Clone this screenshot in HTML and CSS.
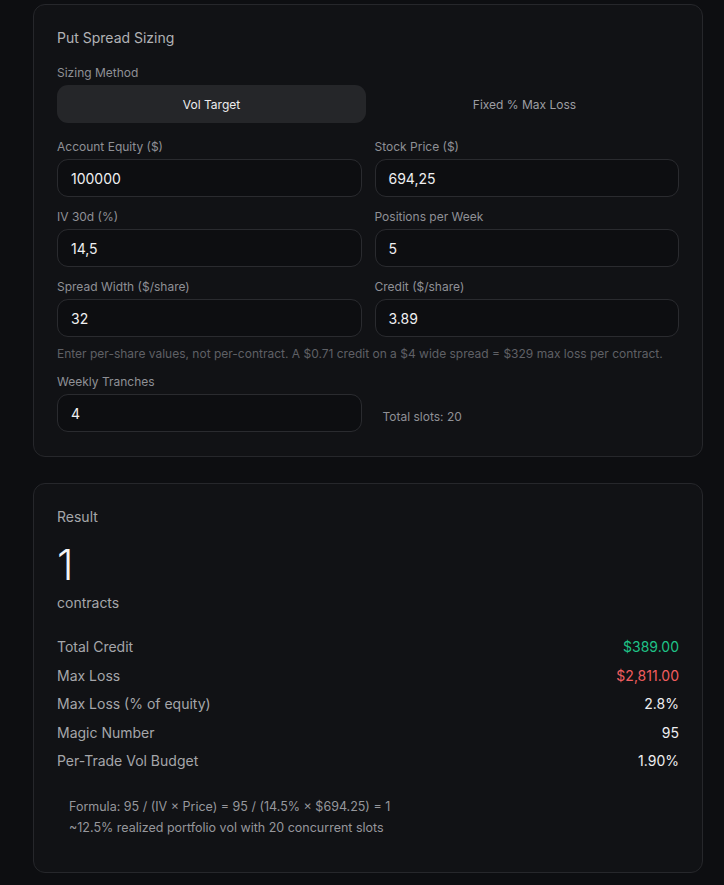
FILE: index.html
```html
<!DOCTYPE html>
<html lang="en">
<head>
<meta charset="utf-8">
<title>Put Spread Sizing</title>
<link rel="stylesheet" href="styles.css">
</head>
<body>
<main class="page">
  <section class="card">
    <h2 class="card-title">Put Spread Sizing</h2>
    <div class="label">Sizing Method</div>
    <div class="toggle">
      <button class="toggle-btn active">Vol Target</button>
      <button class="toggle-btn">Fixed % Max Loss</button>
    </div>
    <div class="grid">
      <div class="field">
        <div class="label">Account Equity ($)</div>
        <div class="input">100000</div>
      </div>
      <div class="field">
        <div class="label">Stock Price ($)</div>
        <div class="input">694,25</div>
      </div>
      <div class="field">
        <div class="label">IV 30d (%)</div>
        <div class="input">14,5</div>
      </div>
      <div class="field">
        <div class="label">Positions per Week</div>
        <div class="input">5</div>
      </div>
      <div class="field">
        <div class="label">Spread Width ($/share)</div>
        <div class="input">32</div>
      </div>
      <div class="field">
        <div class="label">Credit ($/share)</div>
        <div class="input">3.89</div>
      </div>
    </div>
    <p class="hint">Enter per-share values, not per-contract. A $0.71 credit on a $4 wide spread = $329 max loss per contract.</p>
    <div class="grid">
      <div class="field">
        <div class="label">Weekly Tranches</div>
        <div class="input">4</div>
      </div>
      <div class="slots">Total slots: 20</div>
    </div>
  </section>

  <section class="card result">
    <h2 class="result-title">Result</h2>
    <div class="big">1</div>
    <div class="unit">contracts</div>
    <div class="rows">
      <div class="row"><span>Total Credit</span><span class="val green">$389.00</span></div>
      <div class="row"><span>Max Loss</span><span class="val red">$2,811.00</span></div>
      <div class="row"><span>Max Loss (% of equity)</span><span class="val">2.8%</span></div>
      <div class="row"><span>Magic Number</span><span class="val">95</span></div>
      <div class="row"><span>Per-Trade Vol Budget</span><span class="val">1.90%</span></div>
    </div>
    <div class="formula">
      <div>Formula: 95 / (IV × Price) = 95 / (14.5% × $694.25) = 1</div>
      <div>~12.5% realized portfolio vol with 20 concurrent slots</div>
    </div>
  </section>
</main>
</body>
</html>
```
FILE: styles.css
```css
* { box-sizing: border-box; }

html, body {
  margin: 0;
  padding: 0;
  background: #0d0e11;
}

body {
  font-family: Inter, "Noto Sans", "Liberation Sans", sans-serif;
  color: #e9e9eb;
  padding-top: 4px;
}

.page {
  width: 670px;
  margin-left: 33px;
  display: flex;
  flex-direction: column;
  gap: 26px;
}

.card {
  background: #111215;
  border: 1px solid #26272b;
  border-radius: 12px;
  padding: 23px 23px 24px;
}

.card-title {
  margin: 0 0 17px;
  font-size: 14px;
  line-height: 20px;
  font-weight: 400;
  color: #b1b2b6;
}

.label {
  font-size: 12px;
  line-height: 16px;
  color: #8f9095;
  margin-bottom: 4px;
}

.toggle {
  display: grid;
  grid-template-columns: 1fr 1fr;
  gap: 4px;
  margin-bottom: 16px;
}

.toggle-btn {
  height: 38px;
  border: none;
  border-radius: 11px;
  background: transparent;
  color: #9d9ea3;
  font-family: inherit;
  font-size: 12px;
  padding: 0;
}

.toggle-btn.active {
  background: #252629;
  color: #ececee;
}

.grid {
  display: grid;
  grid-template-columns: 1fr 1fr;
  column-gap: 13px;
  row-gap: 12px;
}

.input {
  height: 38px;
  border: 1px solid #2a2b2f;
  border-radius: 11px;
  background: #0d0e11;
  padding: 0 13px;
  display: flex;
  align-items: center;
  font-size: 14px;
  color: #f0f0f2;
}

.hint {
  margin: 9px 0 12px;
  font-size: 12px;
  line-height: 16px;
  color: #5f6065;
}

.slots {
  align-self: end;
  height: 38px;
  display: flex;
  align-items: center;
  padding: 6px 0 0 8px;
  font-size: 12px;
  color: #8f9095;
}

.result-title {
  margin: 0;
  font-size: 14px;
  line-height: 20px;
  font-weight: 400;
  color: #a5a6aa;
}

.big {
  margin-top: 14px;
  font-size: 42px;
  line-height: 48px;
  font-weight: 300;
  color: #f4f4f5;
}

.unit {
  margin-top: 4px;
  font-size: 14px;
  line-height: 20px;
  color: #a5a6aa;
}

.rows {
  margin-top: 24px;
  display: flex;
  flex-direction: column;
  gap: 8.5px;
}

.row {
  display: flex;
  justify-content: space-between;
  font-size: 14px;
  line-height: 20px;
  color: #a5a6aa;
}

.val { color: #eeeef0; }
.val.green { color: #1fc287; }
.val.red { color: #f05d5f; }

.formula {
  margin-top: 15px;
  padding: 10px 12px;
  font-size: 12.5px;
  line-height: 21px;
  color: #96979c;
}
```
